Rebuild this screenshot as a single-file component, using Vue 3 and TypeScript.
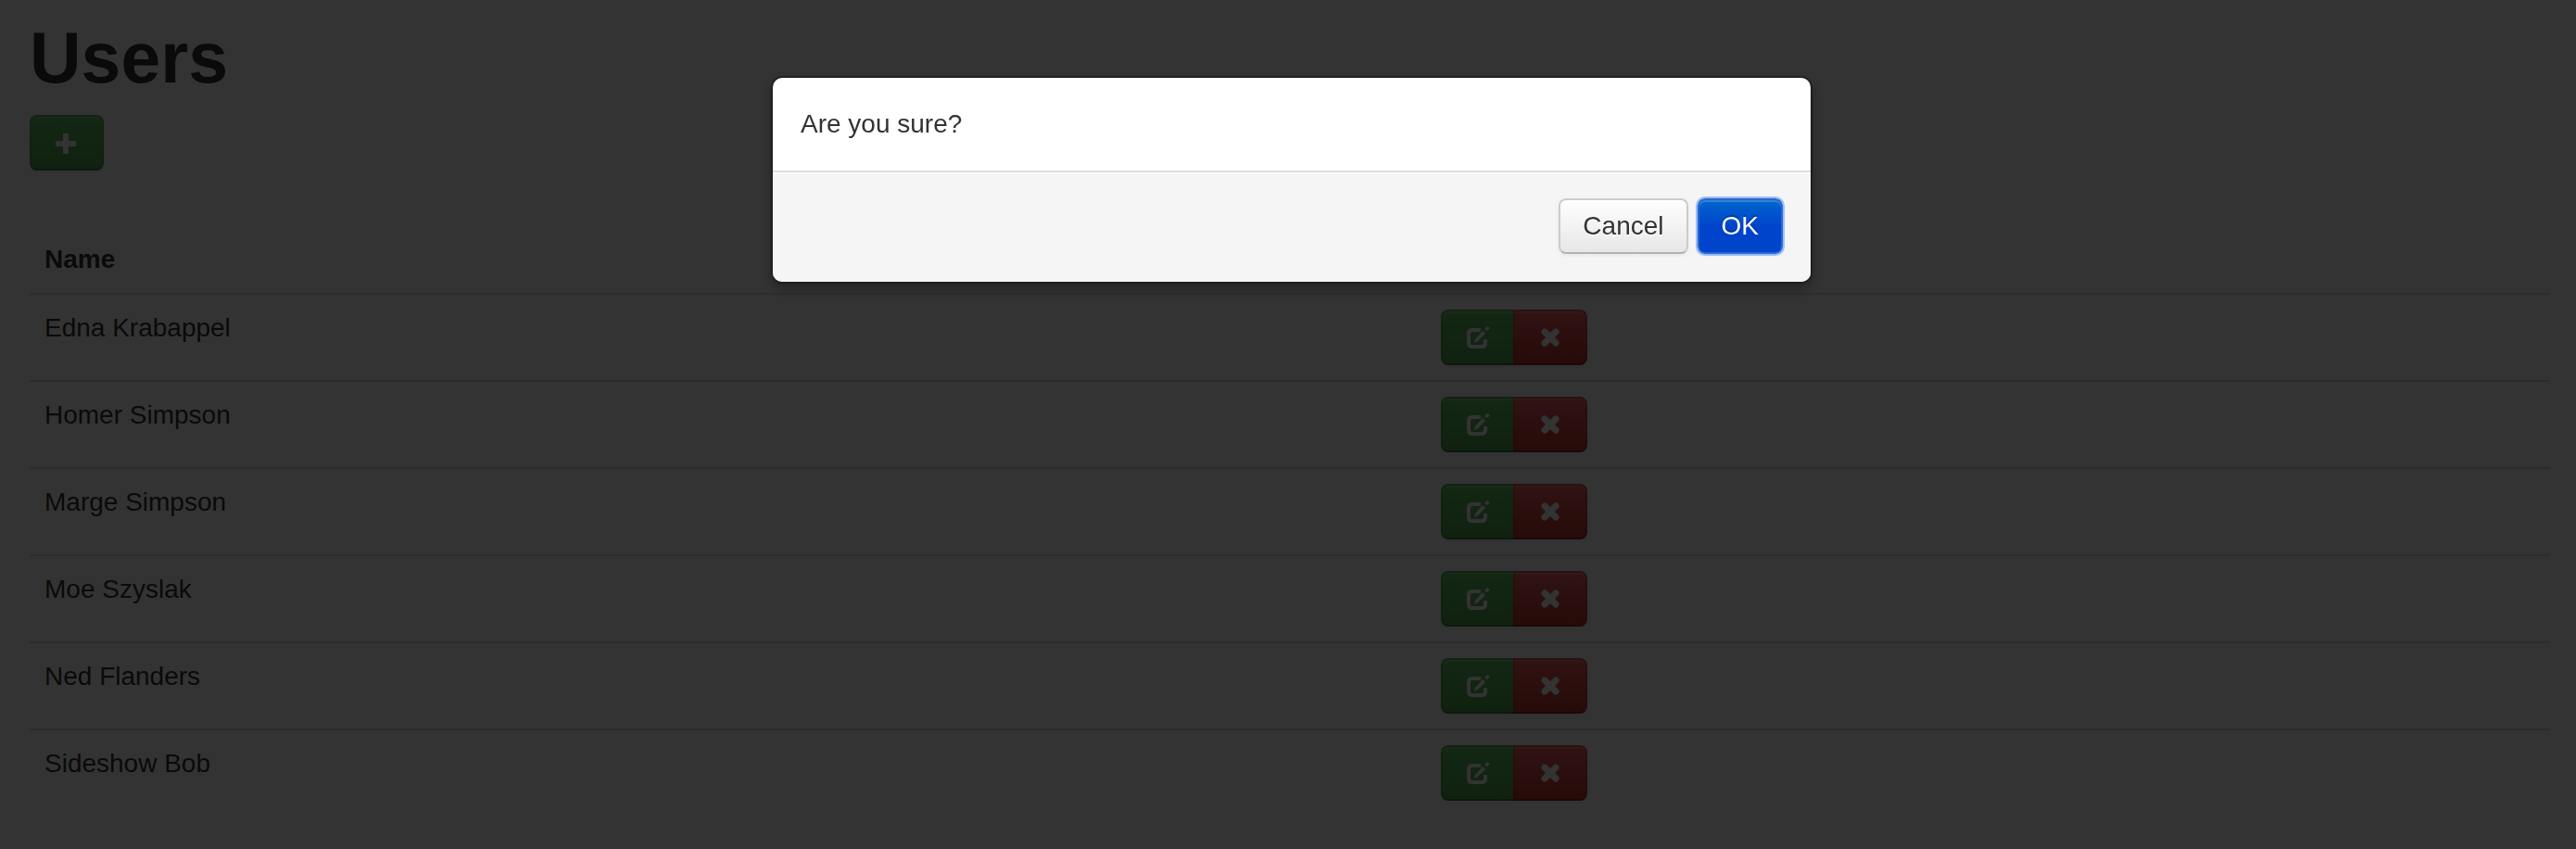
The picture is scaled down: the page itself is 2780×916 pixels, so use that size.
<script setup lang="ts">
import { ref } from 'vue'

interface User {
  id: number
  name: string
}

const users = ref<User[]>([
  { id: 1, name: 'Edna Krabappel' },
  { id: 2, name: 'Homer Simpson' },
  { id: 3, name: 'Marge Simpson' },
  { id: 4, name: 'Moe Szyslak' },
  { id: 5, name: 'Ned Flanders' },
  { id: 6, name: 'Sideshow Bob' },
])

const confirming = ref(true)

function close(): void {
  confirming.value = false
}
</script>

<template>
  <main class="page">
    <h1>Users</h1>
    <button class="btn success" type="button" aria-label="Add user">
      <svg class="icon" viewBox="0 0 28 28" aria-hidden="true">
        <path d="M10 4h6v8h8v6h-8v8h-6v-8H2v-6h8z" fill="#fff" />
      </svg>
    </button>

    <table>
      <thead>
        <tr>
          <th class="name" scope="col">Name</th>
          <th></th>
        </tr>
      </thead>
      <tbody>
        <tr v-for="user in users" :key="user.id">
          <td>{{ user.name }}</td>
          <td>
            <div class="group">
              <button class="btn success" type="button" :aria-label="`Edit ${user.name}`">
                <svg class="icon" viewBox="0 0 28 28" aria-hidden="true">
                  <path
                    d="M17 6H8Q4 6 4 10v10q0 4 4 4h10q4 0 4-4v-4"
                    fill="none" stroke="#fff" stroke-width="4"
                  />
                  <path d="M10 20l1-4 8-9 3 3-8 8zM21 5l3-3 3 2-3 3z" fill="#fff" />
                </svg>
              </button>
              <button
                class="btn danger" type="button" :aria-label="`Delete ${user.name}`"
                @click="confirming = true"
              >
                <svg class="icon" viewBox="0 0 28 28" aria-hidden="true">
                  <path
                    d="M8 8l12 12M20 8L8 20" fill="none" stroke="#fff"
                    stroke-width="7" stroke-linecap="round"
                  />
                </svg>
              </button>
            </div>
          </td>
        </tr>
      </tbody>
    </table>
  </main>

  <div v-if="confirming" class="backdrop">
    <section class="modal" role="dialog" aria-modal="true" aria-labelledby="question">
      <p id="question" class="body">Are you sure?</p>
      <footer>
        <button class="btn" type="button" @click="close">Cancel</button>
        <button class="btn primary" type="button" @click="close">OK</button>
      </footer>
    </section>
  </div>
</template>

<style>
body {
  margin: 0;
  background: #fff;
}
</style>

<style scoped>
.page,
.modal {
  color: #333;
  font: 28px/40px "Liberation Sans", Arial, sans-serif;
}

.page {
  padding: 22px 28px 36px 32px;
}

h1 {
  margin: 0 0 22px;
  font-size: 77px;
  line-height: 80px;
}

.btn {
  box-sizing: border-box;
  display: inline-flex;
  align-items: center;
  justify-content: center;
  height: 60px;
  margin: 0;
  padding: 0 24px;
  border: 2px solid #ccc;
  border-color: #ccc #ccc #b3b3b3;
  border-radius: 8px;
  background: linear-gradient(#fff, #e6e6e6) border-box;
  box-shadow: inset 0 2px 0 rgba(255, 255, 255, 0.2), 0 2px 4px rgba(0, 0, 0, 0.05);
  color: #333;
  font: inherit;
  text-shadow: 0 2px 2px rgba(255, 255, 255, 0.75);
  cursor: pointer;
}

.success {
  border-color: rgba(0, 0, 0, 0.1) rgba(0, 0, 0, 0.1) rgba(0, 0, 0, 0.25);
  background: linear-gradient(#62c462, #51a351) border-box;
}

.danger {
  border-color: rgba(0, 0, 0, 0.1) rgba(0, 0, 0, 0.1) rgba(0, 0, 0, 0.25);
  background: linear-gradient(#ee5f5b, #bd362f) border-box;
}

.primary {
  border-color: #2a67cf;
  background: linear-gradient(#0066cc, #0044cc 50%);
  outline: 2px solid #99bdf7;
  color: #fff;
  text-shadow: 0 -2px 0 rgba(0, 0, 0, 0.25);
}

.icon {
  display: block;
  width: 28px;
  height: 28px;
}

table {
  width: 100%;
  margin-top: 60px;
  border-collapse: separate;
  border-spacing: 0;
}

.name {
  width: 55.4%;
}

th,
td {
  box-sizing: border-box;
  padding: 16px;
  text-align: left;
  vertical-align: top;
}

td {
  border-top: 2px solid #ddd;
}

.group {
  display: flex;
}

.group .btn:first-child {
  border-radius: 8px 0 0 8px;
}

.group .btn + .btn {
  margin-left: -2px;
  border-radius: 0 8px 8px 0;
}

.backdrop {
  position: fixed;
  inset: 0;
  display: flex;
  align-items: flex-start;
  justify-content: center;
  padding: 82px 0 0 8px;
  background: rgba(0, 0, 0, 0.8);
}

.modal {
  width: 1120px;
  max-width: 90%;
  border: 2px solid rgba(0, 0, 0, 0.3);
  border-radius: 12px;
  background: #fff padding-box;
  box-shadow: 0 6px 14px rgba(0, 0, 0, 0.3);
}

.body {
  margin: 0;
  padding: 30px;
}

footer {
  display: flex;
  justify-content: flex-end;
  gap: 10px;
  padding: 28px 30px 30px;
  border-top: 2px solid #ddd;
  border-radius: 0 0 10px 10px;
  background: #f5f5f5;
  box-shadow: inset 0 2px 0 #fff;
}
</style>
